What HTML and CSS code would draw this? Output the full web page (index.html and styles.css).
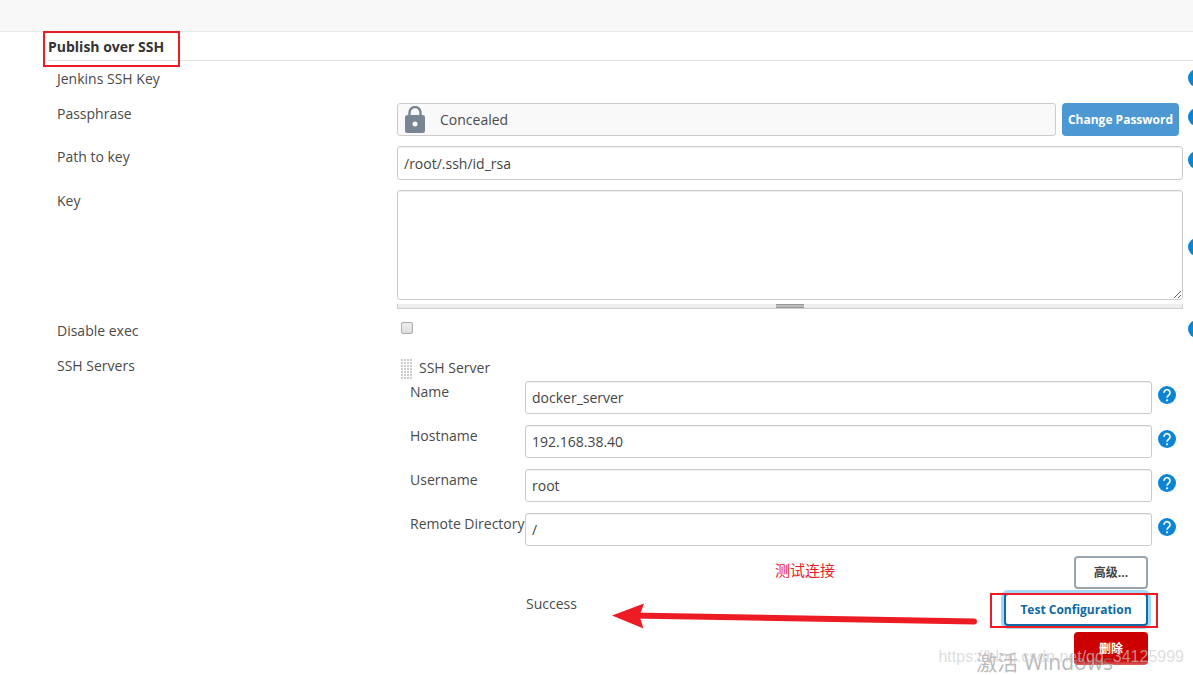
FILE: index.html
```html
<!DOCTYPE html>
<html lang="en">
<head>
<meta charset="utf-8">
<title>Publish over SSH</title>
<link rel="stylesheet" href="styles.css">
</head>
<body>
<svg class="defs" aria-hidden="true">
  <symbol id="help" viewBox="0 0 24 24">
    <circle cx="12" cy="12" r="12" fill="#0a85d6"/>
    <path d="M8 8.900a4 4 0 1 1 6.300 3.300c-1.400 1-2.200 1.700-2.200 3.400" fill="none" stroke="#fff" stroke-width="2.300"/>
    <circle cx="12.100" cy="19" r="1.500" fill="#fff"/>
  </symbol>
</svg>
<header class="topbar"></header>
<main class="config">
  <h2 class="section-title">Publish over SSH<span class="mark mark-title"></span></h2>
  <form class="form">
    <div class="row row-key">
      <span class="label">Jenkins SSH Key</span>
      <span></span>
      <a class="help" href="#" aria-label="Help: Jenkins SSH Key"><svg><use href="#help"/></svg></a>
    </div>
    <div class="row">
      <span class="label">Passphrase</span>
      <div class="secret">
        <div class="concealed">
          <svg class="lock" viewBox="0 0 20 27" aria-hidden="true">
            <path d="M4.500 11V6.500a5.500 5.500 0 0 1 11 0V11" fill="none" stroke="#788594" stroke-width="2.400"/>
            <rect x="0" y="9" width="20" height="18" rx="2.500" fill="#788594"/>
            <circle cx="10" cy="18" r="2.500" fill="#fff"/>
          </svg>
          <span>Concealed</span>
        </div>
        <button class="btn btn-change" type="button">Change Password</button>
      </div>
      <a class="help" href="#" aria-label="Help: Passphrase"><svg><use href="#help"/></svg></a>
    </div>
    <div class="row">
      <label class="label" for="path">Path to key</label>
      <input class="field" id="path" type="text" value="/root/.ssh/id_rsa">
      <a class="help" href="#" aria-label="Help: Path to key"><svg><use href="#help"/></svg></a>
    </div>
    <div class="row">
      <label class="label" for="key">Key</label>
      <div class="area">
        <textarea class="field textarea" id="key"></textarea>
        <div class="grip"><span class="grip-bar"></span></div>
      </div>
      <a class="help help-middle" href="#" aria-label="Help: Key"><svg><use href="#help"/></svg></a>
    </div>
    <div class="row row-check">
      <label class="label" for="disable">Disable exec</label>
      <input class="check" id="disable" type="checkbox">
      <a class="help help-top" href="#" aria-label="Help: Disable exec"><svg><use href="#help"/></svg></a>
    </div>
    <div class="row">
      <span class="label">SSH Servers</span>
      <div class="server">
        <div class="server-head"><span class="drag"></span><span>SSH Server</span></div>
        <div class="server-row">
          <label class="label" for="name">Name</label>
          <input class="field" id="name" type="text" value="docker_server">
          <a class="help" href="#" aria-label="Help: Name"><svg><use href="#help"/></svg></a>
        </div>
        <div class="server-row">
          <label class="label" for="host">Hostname</label>
          <input class="field" id="host" type="text" value="192.168.38.40">
          <a class="help" href="#" aria-label="Help: Hostname"><svg><use href="#help"/></svg></a>
        </div>
        <div class="server-row">
          <label class="label" for="user">Username</label>
          <input class="field" id="user" type="text" value="root">
          <a class="help" href="#" aria-label="Help: Username"><svg><use href="#help"/></svg></a>
        </div>
        <div class="server-row">
          <label class="label" for="dir">Remote Directory</label>
          <input class="field" id="dir" type="text" value="/">
          <a class="help" href="#" aria-label="Help: Remote Directory"><svg><use href="#help"/></svg></a>
        </div>
        <div class="actions">
          <button class="btn btn-advanced" type="button">高级...</button>
          <div class="test-row">
            <span class="status">Success</span>
            <div class="test"><button class="btn btn-test" type="button">Test Configuration</button><span class="mark mark-test"></span></div>
          </div>
          <button class="btn btn-delete" type="button">删除</button>
          <span class="note">测试连接</span>
          <svg class="arrow" viewBox="0 0 366 26" aria-hidden="true">
            <path d="M20 12.500L362 18.500" stroke="#ed1c24" stroke-width="6" stroke-linecap="round"/>
            <path d="M0 12.500L32 0.500L27.500 13L31.500 25.500Z" fill="#ed1c24"/>
          </svg>
        </div>
      </div>
    </div>
  </form>
</main>
<div class="watermark activate">激活 Windows</div>
<div class="watermark url">https://blog.csdn.net/qq_34125999</div>
</body>
</html>
```
FILE: styles.css
```css
* {
  box-sizing: border-box;
}

body {
  position: relative;
  margin: 0;
  min-height: 100vh;
  overflow: hidden;
  background: #fff;
  color: #4a4a4a;
  font: 14px/20px "Open Sans", "Noto Sans CJK SC", sans-serif;
}

.defs {
  position: absolute;
  width: 0;
  height: 0;
}

.topbar {
  height: 32px;
  background: #f8f8f8;
  border-bottom: 1px solid #e8e8e8;
}

.config {
  padding-left: 48px;
}

.section-title {
  position: relative;
  margin: 0;
  height: 29px;
  padding-top: 5px;
  border-bottom: 1px solid #e2e2e2;
  color: #333;
  font-size: 14px;
  line-height: 20px;
}

.mark {
  position: absolute;
  border: 2px solid #ed1c24;
  pointer-events: none;
}

.mark-title {
  left: -5px;
  top: -1px;
  width: 137px;
  height: 36px;
}

.form {
  display: flex;
  flex-direction: column;
  gap: 10px;
  padding: 8px 0 0 9px;
}

.row {
  display: grid;
  grid-template-columns: 340px minmax(0, 1fr) 5px;
  column-gap: 5px;
}

.row-key {
  min-height: 24px;
}

.row-check {
  min-height: 26px;
}

.label {
  padding-top: 1px;
  white-space: nowrap;
}

.row-key .label {
  padding-top: 0;
}

.row-check .label {
  padding-top: 2px;
}

.row > :nth-child(2) {
  margin-left: -5px;
}

.field {
  width: 100%;
  height: 34px;
  padding: 0 6px;
  border: 1px solid #ccc;
  border-radius: 3px;
  background: #fff;
  box-shadow: inset 0 1px 1px #0001;
  color: #444;
  font: inherit;
}

.row > input.field {
  width: auto;
}

.secret {
  display: flex;
  gap: 6px;
  padding-right: 4px;
}

.concealed {
  display: flex;
  flex: 1;
  align-items: center;
  gap: 15px;
  height: 33px;
  padding-left: 7px;
  border: 1px solid #ccc;
  border-radius: 3px;
  background: #f9f9f9;
}

.lock {
  width: 20px;
  height: 27px;
}

.btn {
  height: 33px;
  border: 0;
  border-radius: 4px;
  font: bold 12px/20px "Open Sans", "Noto Sans CJK SC", sans-serif;
  white-space: nowrap;
}

.btn-change {
  width: 117px;
  padding: 0;
  background: #4b98d2;
  color: #fff;
}

.help {
  width: 18px;
  height: 18px;
  margin-top: 5px;
}

.help svg {
  display: block;
  width: 18px;
  height: 18px;
}

.row-key .help {
  margin-top: 0;
}

.help-top {
  margin-top: 1px;
}

.help-middle {
  align-self: center;
  margin: 0 0 6px;
}

.textarea {
  display: block;
  height: 110px;
}

.grip {
  display: flex;
  justify-content: center;
  height: 5px;
  margin-top: 4px;
  border: 1px solid #ccc;
  border-top: 0;
  background: #eee;
}

.grip-bar {
  width: 28px;
  height: 4px;
  border: solid #999;
  border-width: 1px 0;
  background: #bbb;
}

.check {
  appearance: none;
  width: 12px;
  height: 12px;
  margin: 3px 4px;
  border: 1px solid #aaa;
  border-radius: 2px;
  background: linear-gradient(#eee, #ddd);
}

.row > .check {
  margin-left: -1px;
}

.server-head {
  display: flex;
  gap: 7px;
  height: 26px;
  padding: 3px 0 0 3px;
}

.drag {
  width: 12px;
  height: 21px;
  background:
    linear-gradient(90deg, #fff 1px, transparent 1px) 0 0 / 3px 3px,
    linear-gradient(#fff 1px, #ccc 1px) 0 0 / 3px 3px;
}

.server-row {
  display: grid;
  grid-template-columns: 115px minmax(0, 1fr) 24px;
  height: 44px;
  padding: 0 7px 0 13px;
}

.server-row .label {
  padding-top: 1px;
}

.server-row .field {
  height: 33px;
}

.server-row .help {
  margin: 5px 0 0 6px;
}

.actions {
  position: relative;
  display: flex;
  flex-direction: column;
  align-items: flex-end;
  gap: 4px;
  margin-top: -1px;
  padding-right: 35px;
}

.btn-advanced {
  width: 74px;
  border: 2px solid #98a5af;
  background: #fff;
  color: #444;
}

.test-row {
  display: flex;
  align-self: stretch;
  justify-content: space-between;
  padding-left: 129px;
}

.status {
  padding-top: 1px;
}

.test {
  position: relative;
}

.btn-test {
  width: 144px;
  border: 2px solid #1069a4;
  background: #fff;
  box-shadow: 0 0 0 3px #a3d8fb;
  color: #1069a4;
}

.mark-test {
  left: -14px;
  top: 0;
  width: 168px;
  height: 35px;
}

.btn-delete {
  width: 74px;
  margin-top: 2px;
  background: linear-gradient(#c00 85%, #d66);
  color: #fff;
}

.note {
  position: absolute;
  left: 378px;
  top: 4px;
  color: #ed1c24;
  font-size: 15px;
}

.arrow {
  position: absolute;
  left: 215px;
  top: 47px;
  width: 366px;
  height: 26px;
}

.watermark {
  position: absolute;
  white-space: nowrap;
  pointer-events: none;
}

.activate {
  right: 80px;
  top: 650px;
  color: #8889;
  font-size: 21px;
  line-height: 24px;
}

.url {
  right: 9px;
  top: 647px;
  color: #ccca;
  font: 16px/20px "Liberation Sans", sans-serif;
}
```
